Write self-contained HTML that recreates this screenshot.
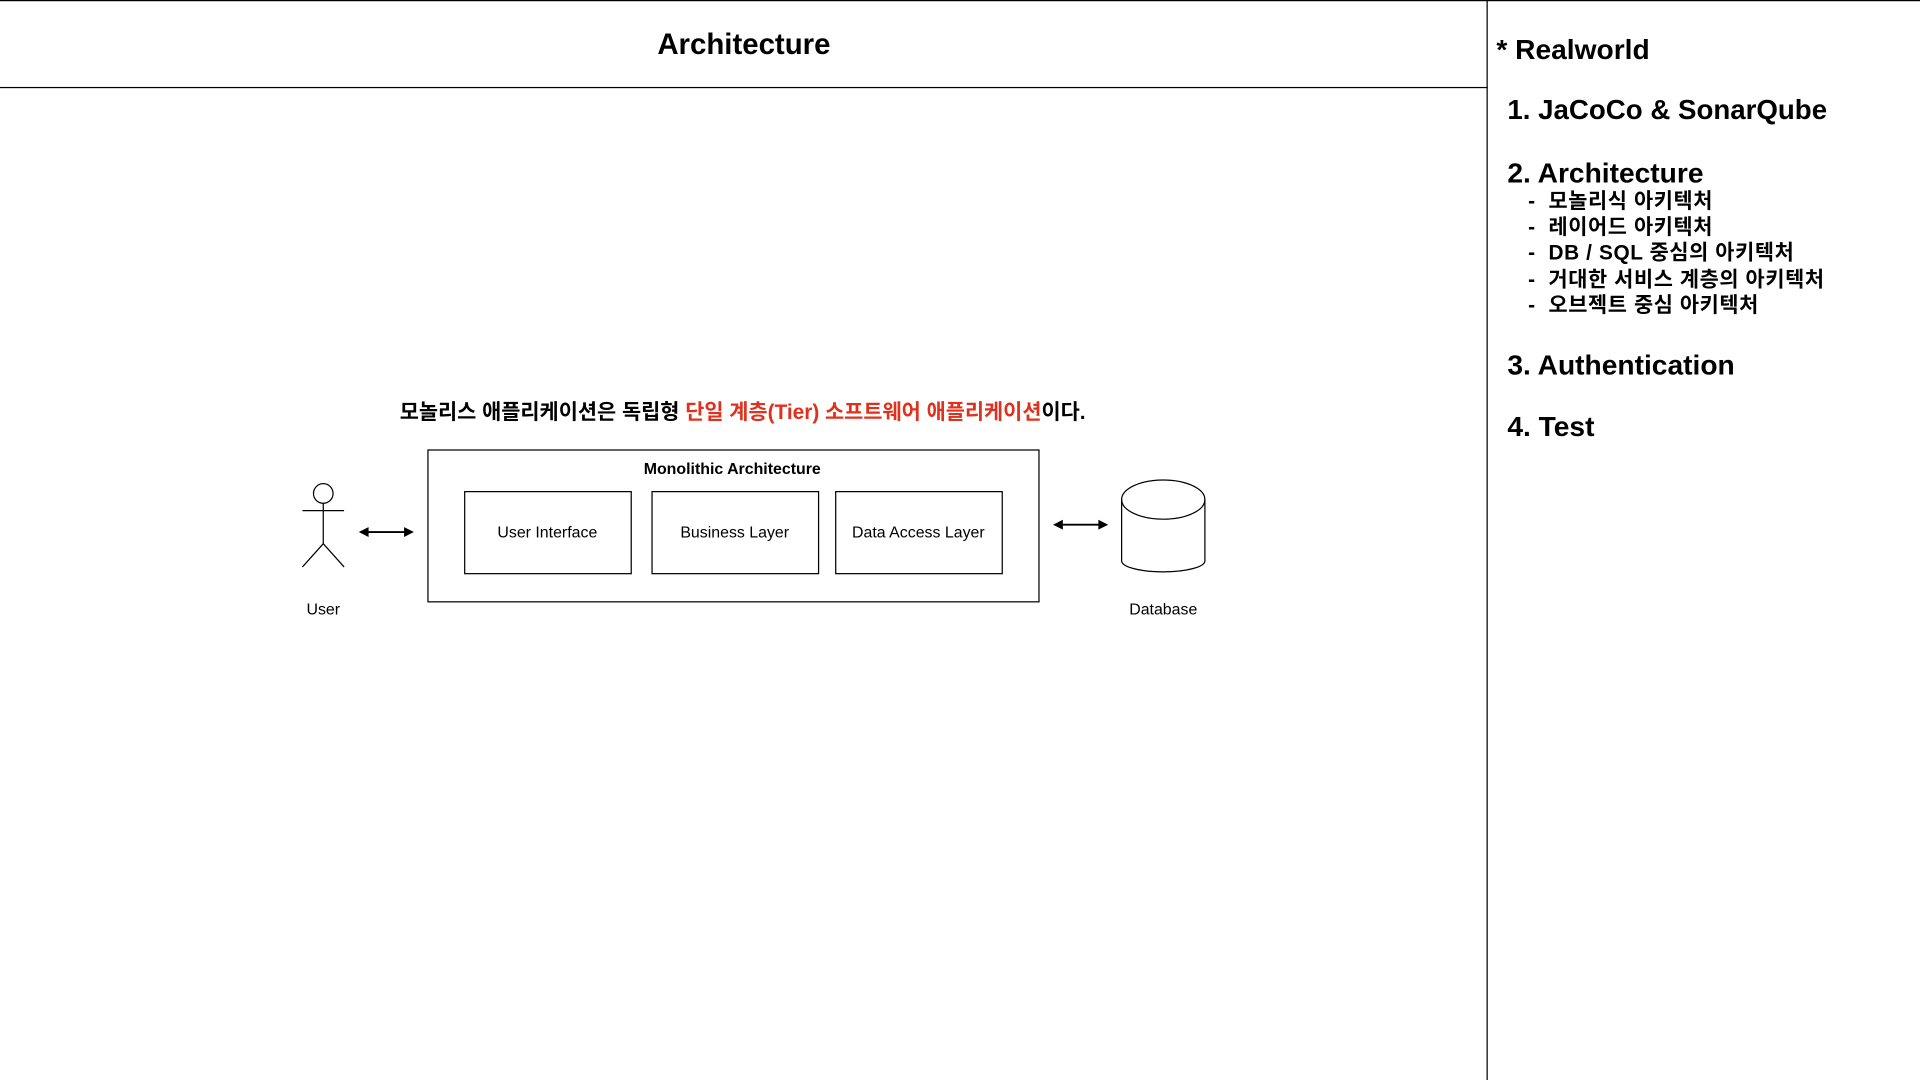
<!DOCTYPE html>
<html><head><meta charset="utf-8"><style>
html,body{margin:0;padding:0;background:#fff;overflow:hidden}
#s{position:absolute;left:0;top:0;width:1568px;height:882px;transform:scale(1.22449);transform-origin:0 0;font-family:"Liberation Sans","Noto Sans CJK KR",sans-serif;color:#000}
.t{position:absolute;white-space:nowrap;line-height:1}
.b{font-weight:bold}
</style></head><body><div id="s">
<div style="position:absolute;left:0;top:0;width:1568px;height:1px;background:#000"></div>
<div style="position:absolute;left:0;top:71px;width:1215px;height:1px;background:#000"></div>
<div style="position:absolute;left:1214px;top:0;width:1px;height:882px;background:#000"></div>
<div class="t b" style="left:0;width:1215px;text-align:center;top:25px;font-size:24px">Architecture</div>

<div class="t b" style="left:1222px;top:29px;font-size:23px">* Realworld</div>
<div class="t b" style="left:1231px;top:79px;font-size:22.6px">1. JaCoCo &amp; SonarQube</div>
<div class="t b" style="left:1231px;top:130px;font-size:23px">2. Architecture</div>
<div class="t b" style="left:1248px;top:154px;font-size:17px;line-height:21.2px;letter-spacing:0.5px">-&nbsp; 모놀리식 아키텍처<br>-&nbsp; 레이어드 아키텍처<br>-&nbsp; DB / SQL 중심의 아키텍처<br>-&nbsp; 거대한 서비스 계층의 아키텍처<br>-&nbsp; 오브젝트 중심 아키텍처</div>
<div class="t b" style="left:1231px;top:287px;font-size:23px">3. Authentication</div>
<div class="t b" style="left:1231px;top:337px;font-size:23px">4. Test</div>

<div class="t b" style="left:0;width:1213px;text-align:center;top:328px;font-size:17px">모놀리스 애플리케이션은 독립형 <span style="color:#e0301e">단일 계층(Tier) 소프트웨어 애플리케이션</span>이다.</div>

<svg style="position:absolute;left:0;top:0" width="1215" height="882">
<g fill="none" stroke="#000" stroke-width="1">
<rect x="349.5" y="367.5" width="499" height="124"/>
<rect x="379.5" y="401.5" width="136" height="67"/>
<rect x="532.5" y="401.5" width="136" height="67"/>
<rect x="682.5" y="401.5" width="136" height="67"/>
<circle cx="264" cy="403" r="8"/>
<path d="M264 411V444M247 417H281M264 444L247 463M264 444L281 463"/>
<path d="M916 408V458A34 9 0 0 0 984 458V408"/>
<ellipse cx="950" cy="408" rx="34" ry="16"/>
<path d="M297 434.5H333M864 428.5H900" stroke-width="1.5"/>
</g>
<g fill="#000">
<path d="M293 434.5L301 430.5V438.5ZM338 434.5L330 430.5V438.5Z"/>
<path d="M860 428.5L868 424.5V432.5ZM905 428.5L897 424.5V432.5Z"/>
</g>
<g font-family="Liberation Sans, sans-serif" font-size="13" text-anchor="middle">
<text x="598" y="387" font-weight="bold">Monolithic Architecture</text>
<text x="447" y="439">User Interface</text>
<text x="600" y="439">Business Layer</text>
<text x="750" y="439">Data Access Layer</text>
<text x="264" y="502">User</text>
<text x="950" y="502">Database</text>
</g>
</svg>
</div></body></html>
